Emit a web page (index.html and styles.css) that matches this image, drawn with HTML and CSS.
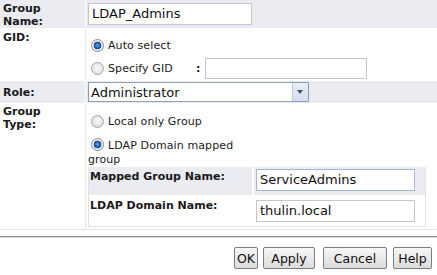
FILE: index.html
```html
<!DOCTYPE html>
<html>
<head>
<meta charset="utf-8">
<link rel="stylesheet" href="styles.css">
</head>
<body>
<div class="form">
  <div class="row shade r1">
    <div class="lbl">Group<br>Name:</div>
    <div class="val"><div class="input w164">LDAP_Admins</div></div>
  </div>
  <div class="row plain r2">
    <div class="lbl">GID:</div>
    <div class="val gid">
      <div class="opt o1"><span class="radio on"></span><span>Auto select</span></div>
      <div class="opt o2"><span class="radio"></span><span class="spec">Specify GID</span><span class="colon">:</span><div class="input w162"></div></div>
    </div>
  </div>
  <div class="row shade r3">
    <div class="lbl role">Role:</div>
    <div class="val"><div class="select"><span class="seltext">Administrator</span><span class="arrow"></span></div></div>
  </div>
  <div class="row plain r4">
    <div class="lbl">Group<br>Type:</div>
    <div class="val gtype">
      <div class="opts">
        <div class="opt t1"><span class="radio"></span><span>Local only Group</span></div>
        <div class="t2"><span class="radio on"></span>LDAP Domain mapped group</div>
      </div>
      <div class="nested">
        <div class="nrow nshade">
          <div class="nlbl">Mapped Group Name:</div>
          <div class="nval"><div class="input w159 focus">ServiceAdmins</div></div>
        </div>
        <div class="nrow nplain">
          <div class="nlbl">LDAP Domain Name:</div>
          <div class="nval"><div class="input w159">thulin.local</div></div>
        </div>
      </div>
    </div>
  </div>
  <div class="rule"></div>
  <div class="buttons">
    <button class="btn b-ok">OK</button>
    <button class="btn b-apply">Apply</button>
    <button class="btn b-cancel">Cancel</button>
    <button class="btn b-help">Help</button>
  </div>
</div>
</body>
</html>
```
FILE: styles.css
```css
html, body { margin: 0; padding: 0; background: #fff; }
body {
  font-family: "DejaVu Sans", Verdana, sans-serif;
  font-size: 11px;
  color: #1a1a1a;
  letter-spacing: 0.1px;
}
.form { width: 437px; }
.row {
  display: grid;
  grid-template-columns: 85px 1fr;
  column-gap: 1px;
}
.row.shade { background: #fff; }
.row.shade > div { background: #ebebf2; }
.row.plain { background: #e7e7ec; }
.row.plain > div { background: #fff; }
.lbl {
  font-weight: bold;
  line-height: 13px;
  padding: 2px 0 0 3px;
  letter-spacing: 0;
}
.val { padding-left: 2px; }
.r1 { height: 28px; margin-bottom: 1px; }
.r1 .val { padding-top: 3px; }
.r2 { height: 52px; }
.r3 { height: 22px; }
.r3 .val { padding-top: 1px; }
.role { padding-top: 5px; }
.r4 { height: 126px; border-bottom: 1px solid #e4e4ea; }

.input {
  box-sizing: border-box;
  height: 22px;
  border: 1px solid #c3c6cc;
  background: #fff;
  font-size: 13px;
  line-height: 20px;
  padding-left: 3px;
  color: #111;
  letter-spacing: 0;
}
.input.focus { border-color: #a4b6d2; }
.w164 { width: 164px; }
.w162 { width: 162px; height: 21px; }
.w159 { width: 159px; }

.gid { padding-top: 6px; }
.opt { display: flex; align-items: center; }
.o1 { height: 21px; }
.o2 { height: 24px; }
.radio {
  display: inline-block;
  box-sizing: border-box;
  width: 13px;
  height: 13px;
  border-radius: 50%;
  border: 1px solid #a8a8a8;
  background: radial-gradient(circle at 50% 45%, #fafafa 0, #e4e4e4 60%, #cfcfcf 100%);
  margin: 0 4px 0 3px;
  flex: none;
}
.radio.on {
  border-color: #8a8f96;
  background: radial-gradient(circle, #5fa8ef 0, #1f62b5 2.5px, #2b4f80 3.6px, #eef0f2 4.2px, #d8dadd 100%);
}
.spec { width: 88px; }
.colon { font-weight: bold; width: 9px; }

.select {
  box-sizing: border-box;
  width: 221px;
  height: 20px;
  border: 1px solid #8e9db3;
  background: #fff;
  display: flex;
  align-items: center;
}
.seltext { flex: 1; font-size: 13px; padding-left: 2px; color: #111; letter-spacing: 0; }
.arrow {
  width: 16px;
  height: 18px;
  box-sizing: border-box;
  border-left: 1px solid #b9c7dc;
  background: linear-gradient(#e8eef8, #d3def0);
  position: relative;
}
.arrow::after {
  content: "";
  position: absolute;
  left: 4px;
  top: 7px;
  border-left: 3.5px solid transparent;
  border-right: 3.5px solid transparent;
  border-top: 4px solid #4a4f57;
}

.opts { width: 160px; }
.t1 { height: 24px; margin-top: 6px; }
.t2 { line-height: 14px; padding-top: 5px; }
.t2 .radio { vertical-align: -2px; }

.nested {
  width: 338px;
  box-sizing: border-box;
  margin-top: 0;
  border: 1px solid #e2e2e8;
  border-top: none;
  display: flex;
  flex-direction: column;
  row-gap: 1px;
}
.nrow {
  display: grid;
  grid-template-columns: 163px 1fr;
  column-gap: 2px;
}
.nshade { height: 28px; }
.nshade > div { background: #ebebf2; }
.nplain { height: 30px; }
.nlbl {
  font-weight: bold;
  padding: 3px 0 0 1px;
  letter-spacing: 0;
}
.nval { padding: 2px 0 0 2px; }
.nplain .nval { padding-top: 4px; }

.rule {
  margin-top: 6px;
  height: 1px;
  background: #8e8e8e;
  border-bottom: 1px solid #dcdcdc;
}
.buttons {
  display: flex;
  justify-content: flex-end;
  padding: 9px 5px 0 0;
}
.btn {
  box-sizing: border-box;
  height: 22px;
  padding: 0;
  border: 1px solid #7d7d7d;
  border-radius: 2px;
  background: linear-gradient(#f7f7f7, #dcdcdc);
  font-family: "DejaVu Sans", Verdana, sans-serif;
  font-size: 12.5px;
  color: #111;
}
.b-ok { width: 24px; }
.b-apply { width: 52px; margin-left: 5px; }
.b-cancel { width: 64px; margin-left: 8px; }
.b-help { width: 39px; margin-left: 6px; }
```
